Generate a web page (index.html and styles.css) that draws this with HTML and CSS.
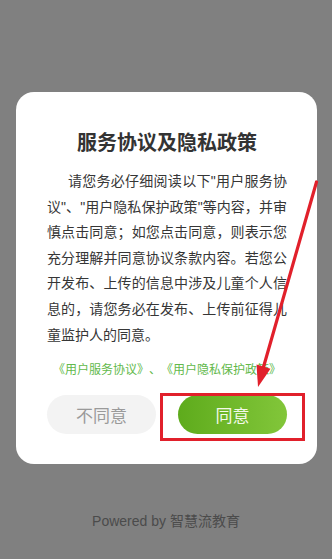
FILE: index.html
```html
<!DOCTYPE html>
<html lang="zh-CN">
<head>
<meta charset="utf-8">
<title>服务协议及隐私政策</title>
<link rel="stylesheet" href="styles.css">
</head>
<body>
<div class="screen">
  <div class="dialog">
    <h1 class="title">服务协议及隐私政策</h1>
    <p class="body-text">请您务必仔细阅读以下"用户服务协议"、"用户隐私保护政策"等内容，并审慎点击同意；如您点击同意，则表示您充分理解并同意协议条款内容。若您公开发布、上传的信息中涉及儿童个人信息的，请您务必在发布、上传前征得儿童监护人的同意。</p>
    <p class="links">《用户服务协议》、《用户隐私保护政策》</p>
    <div class="actions">
      <div class="btn btn-decline">不同意</div>
      <div class="btn btn-agree">同意</div>
    </div>
  </div>
  <div class="powered">Powered by 智慧流教育</div>

  <div class="mark-box"></div>
  <svg class="mark-arrow" width="332" height="559" viewBox="0 0 332 559">
    <line x1="316.5" y1="182" x2="263.5" y2="367" stroke="#e1202b" stroke-width="3.2" stroke-linecap="round"/>
    <polygon points="256.5,364.5 270.5,368.8 258,387" fill="#e1202b"/>
  </svg>
</div>
</body>
</html>
```
FILE: styles.css
```css
html, body {
  margin: 0;
  padding: 0;
  background: #808080;
}
.screen {
  position: relative;
  width: 332px;
  height: 559px;
  overflow: hidden;
  background: #808080;
  font-family: "Liberation Sans", "Noto Sans CJK SC", sans-serif;
  text-spacing-trim: space-all;
  display: flex;
  flex-direction: column;
  align-items: flex-start;
}
.dialog {
  box-sizing: border-box;
  margin: 92px 0 0 16px;
  width: 301px;
  background: #ffffff;
  border-radius: 18px;
  padding: 36px 30px 30px 31px;
}
.title {
  margin: 0;
  font-size: 20px;
  line-height: 28px;
  font-weight: 700;
  color: #333333;
  text-align: center;
  font-family: "Noto Sans CJK SC", sans-serif;
}
.body-text {
  margin: 13px 0 0;
  font-size: 14px;
  line-height: 25.6px;
  color: #363636;
  text-indent: 21px;
  text-align: justify;
}
.links {
  margin: 13px 0 0;
  font-size: 12px;
  line-height: 16px;
  color: #62b94b;
  text-align: center;
  font-family: "Noto Sans CJK SC", sans-serif;
}
.actions {
  margin-top: 18px;
  display: flex;
  gap: 22px;
}
.btn {
  flex: 1;
  height: 39px;
  border-radius: 20px;
  display: flex;
  align-items: center;
  justify-content: center;
  font-size: 17px;
  font-family: "Noto Sans CJK SC", sans-serif;
}
.btn-decline {
  background: #f3f3f3;
  color: #9a9a9a;
}
.btn-agree {
  background: linear-gradient(90deg, #5eab1c, #82c63a);
  color: #f3f9e8;
}
.powered {
  margin-top: 47px;
  width: 332px;
  text-align: center;
  font-size: 14px;
  line-height: 20px;
  color: #4b4b4b;
}
.mark-box {
  position: absolute;
  left: 160px;
  top: 393px;
  width: 145px;
  height: 48px;
  box-sizing: border-box;
  border: 3px solid #e1202b;
}
.mark-arrow {
  position: absolute;
  left: 0;
  top: 0;
  pointer-events: none;
}
```
